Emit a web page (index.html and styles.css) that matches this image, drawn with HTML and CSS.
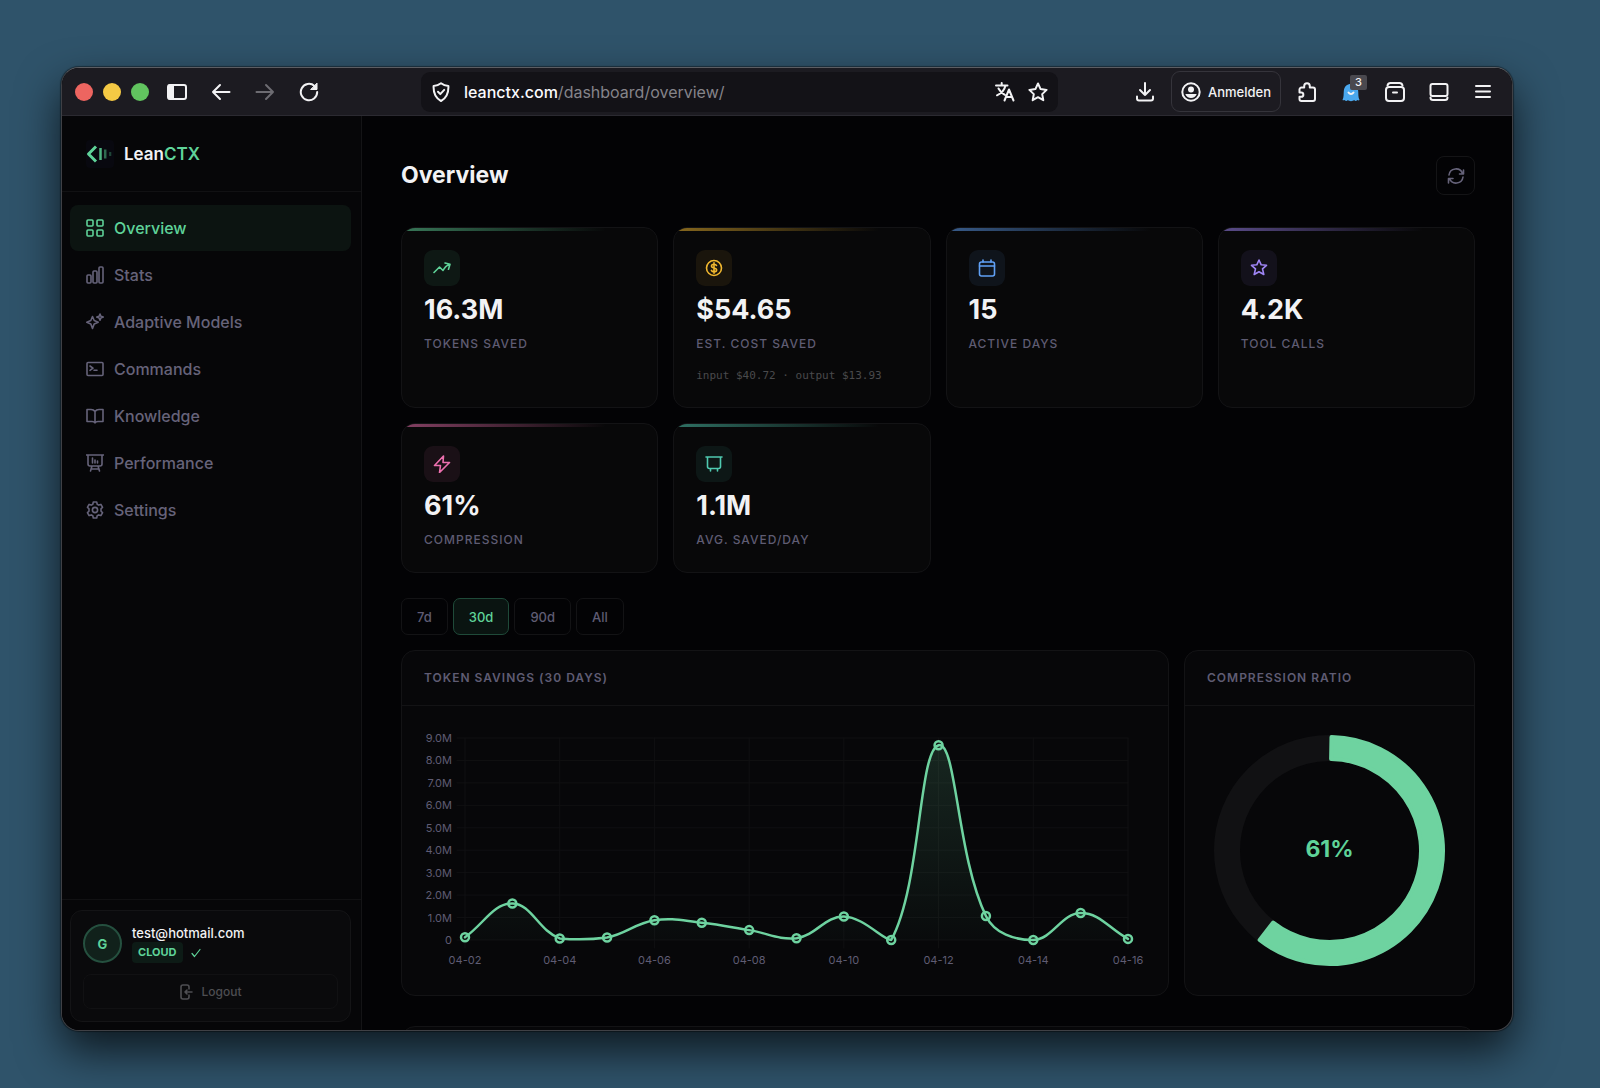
FILE: index.html
```html
<!DOCTYPE html>
<html lang="en">

<head>
    <meta charset="UTF-8" />
    <meta name="viewport" content="width=device-width, initial-scale=1.0" />
    <title>LeanCTX - Overview</title>
    <link rel="stylesheet" href="styles.css">
</head>

<body>
    <div class="window">
        <header class="toolbar">
            <div class="lights">
                <span class="light red"></span>
                <span class="light yellow"></span>
                <span class="light green"></span>
            </div>
            <div class="tools">
                <button class="tool" aria-label="Sidebar">
                    <svg width="20" height="20" viewBox="0 0 20 20"><rect x="1" y="3" width="18" height="14" rx="2" /><path d="M2 3.500h4v13H2z" fill="currentColor" /></svg>
                </button>
                <button class="tool" aria-label="Back">
                    <svg width="20" height="20" viewBox="0 0 20 20"><path d="M18.500 10H2M9 3l-7 7 7 7" /></svg>
                </button>
                <button class="tool dim" aria-label="Forward">
                    <svg width="20" height="20" viewBox="0 0 20 20"><path d="M1.500 10H18M11 3l7 7-7 7" /></svg>
                </button>
                <button class="tool" aria-label="Reload">
                    <svg width="20" height="20" viewBox="0 0 20 20"><path d="M18.200 10A8.200 8.200 0 1 1 15.500 4" /><path d="M18 1.500v6h-6z" fill="currentColor" stroke-width="1" /></svg>
                </button>
            </div>
            <div class="address">
                <svg width="20" height="20" viewBox="0 0 20 20"><path d="M10 1.200c2.200 1.700 4.800 2.600 7.400 2.800.3 6.500-1.800 12-7.400 15C4.400 16 2.300 10.500 2.600 4 5.200 3.800 7.800 2.900 10 1.200z" /><path d="M7 9.800l2.300 2.300 3.900-4.200" /></svg>
                <span class="url"><b>leanctx.com</b>/dashboard/overview/</span>
                <svg width="20" height="20" viewBox="0 0 20 20"><path d="M1 3.500h11.500M6.700 1v2.500M10.500 3.500C9.500 8 6 11.500 2 13.300M3.500 6.500c1.500 3 3.800 5 6.300 6.300M9.500 18.500l4.500-11 4.500 11M11 15h6" /></svg>
                <svg width="20" height="20" viewBox="0 0 20 20"><path d="M10 1.500l2.600 5.600 6 .8-4.400 4.200 1.100 6.100L10 15.200l-5.300 3 1.100-6.100L1.400 7.900l6-.8z" /></svg>
            </div>
            <div class="tools">
                <button class="tool" aria-label="Downloads">
                    <svg width="20" height="20" viewBox="0 0 20 20"><path d="M10 1v12M5 8l5 5 5-5M2 14.500v2a2 2 0 0 0 2 2h12a2 2 0 0 0 2-2v-2" /></svg>
                </button>
                <button class="signin">
                    <svg width="20" height="20" viewBox="0 0 20 20"><circle cx="10" cy="10" r="8.700" /><circle cx="10" cy="7.500" r="3" fill="currentColor" stroke="none" /><path d="M4.300 12h11.400c-1 2.600-3 4-5.700 4s-4.700-1.400-5.700-4z" fill="currentColor" stroke="none" /></svg>
                    Anmelden
                </button>
                <button class="tool" aria-label="Extensions">
                    <svg width="20" height="20" viewBox="0 0 20 20"><path d="M7.200 5.500V4a2.800 2.800 0 0 1 5.600 0v1.500H16a2 2 0 0 1 2 2V17a2 2 0 0 1-2 2H4.500a2 2 0 0 1-2-2v-2.200h1.700a2 2 0 0 0 0-4.300H2.500V7.500a2 2 0 0 1 2-2z" /></svg>
                </button>
                <button class="tool" aria-label="Blocker">
                    <svg width="20" height="20" viewBox="0 0 20 20"><path d="M3.500 18c-.7.500-1.700.3-2 0 1.500-3 1-6 1.300-9C3.200 4.500 6 2 10 2s6.800 2.500 7.200 7c.3 3-.2 6 1.300 9-.6.600-1.500.5-2.200 0-1 1.300-2.200 1.300-3.200 0-1 1.500-5.200 1.500-6.200 0-1 1.300-2.200 1.300-3.400 0z" fill="#4aa8ee" stroke="none" /><path d="M7.500 10.500c1.300 2 3.700 2 5 0" /></svg>
                    <span class="count">3</span>
                </button>
                <button class="tool" aria-label="Archive">
                    <svg width="22" height="22" viewBox="0 0 22 22"><rect x="2" y="6" width="18" height="14" rx="3" /><path d="M3.500 4.500C4 2.500 5 2 6.500 2h9c1.500 0 2.500.5 3 2.500M9 11.500h4" /></svg>
                </button>
                <button class="tool" aria-label="Panel">
                    <svg width="20" height="20" viewBox="0 0 20 20"><rect x="1.500" y="2" width="17" height="12" rx="2" /><path d="M1.500 15.500c0 1.800.8 2.500 2.500 2.500h12c1.700 0 2.500-.7 2.500-2.500" /></svg>
                </button>
                <button class="tool" aria-label="Menu">
                    <svg width="20" height="20" viewBox="0 0 20 20"><path d="M3 4h14M3 9.500h14M3 15h14" /></svg>
                </button>
            </div>
        </header>

        <div class="app">
            <aside class="sidebar">
                <div class="brand">
                    <svg width="28" height="28" viewBox="0 0 28 28"><rect width="28" height="28" rx="4" fill="#08080f" /><path d="M10 6.500L2.500 14l7.500 7.500" stroke="#5fd399" stroke-width="3" /><path d="M14.500 8v12" stroke="#4fb583" stroke-width="2.500" /><path d="M19.200 9.500v9" stroke="#2f6b50" stroke-width="2.500" /><path d="M24.200 12v4" stroke="#1f4537" stroke-width="2.200" /></svg>
                    <span>Lean<em>CTX</em></span>
                </div>
                <nav class="nav">
                    <a class="active" href="#overview">
                        <svg width="18" height="18" viewBox="0 0 18 18"><rect x="1" y="1" width="6" height="6" rx="1" /><rect x="11" y="1" width="6" height="6" rx="1" /><rect x="1" y="11" width="6" height="6" rx="1" /><rect x="11" y="11" width="6" height="6" rx="1" /></svg>
                        Overview
                    </a>
                    <a href="#stats">
                        <svg width="18" height="18" viewBox="0 0 18 18"><rect x="1" y="9" width="4" height="8" rx="1" /><rect x="7" y="5" width="4" height="12" rx="1" /><rect x="13" y="1" width="4" height="16" rx="1" /></svg>
                        Stats
                    </a>
                    <a href="#models">
                        <svg width="18" height="18" viewBox="0 0 18 18"><path d="M6.500 3.500l1.700 4 4 1.700-4 1.700-1.700 4.600-1.700-4.600-4-1.700 4-1.700z" /><path d="M14 1l.9 2.200 2.300.9-2.300.9L14 7.200 13.100 5l-2.300-.9 2.300-.9z" /></svg>
                        Adaptive Models
                    </a>
                    <a href="#commands">
                        <svg width="18" height="18" viewBox="0 0 18 18"><rect x="1" y="2.500" width="16" height="13" rx="1" /><path d="M4 6l3 2.200-3 2.200M8 10.200h3" /></svg>
                        Commands
                    </a>
                    <a href="#knowledge">
                        <svg width="18" height="18" viewBox="0 0 18 18"><path d="M9 4.500C8 3 6.500 2.500 5 2.500H1v12h5c1.500 0 2.500.5 3 1.500.5-1 1.500-1.500 3-1.500h5v-12h-4c-1.500 0-3 .5-4 2zM9 4.500V16" /></svg>
                        Knowledge
                    </a>
                    <a href="#performance">
                        <svg width="18" height="18" viewBox="0 0 18 18"><path d="M0 1h18M2 1v9a2 2 0 0 0 2 2h10a2 2 0 0 0 2-2V1M6 12l-1.500 5M12 12l1.500 5M5 15h8M6.500 4v5M9 6v3M11.500 7v2" /></svg>
                        Performance
                    </a>
                    <a href="#settings">
                        <svg width="18" height="18" viewBox="0 0 18 18"><path d="M7.300 1h3.400l.5 2.200 1.500.9 2.200-.7 1.700 2.900L15 7.900v2.200l1.600 1.600-1.700 2.900-2.200-.7-1.500.9-.5 2.200H7.300l-.5-2.200-1.500-.9-2.200.7-1.700-2.900L3 10.100V7.900L1.400 6.300l1.700-2.900 2.200.7 1.500-.9z" /><circle cx="9" cy="9" r="2.600" /></svg>
                        Settings
                    </a>
                </nav>
                <div class="account">
                    <div class="account-card">
                        <div class="user">
                            <span class="avatar">G</span>
                            <div>
                                <div class="email">test@hotmail.com</div>
                                <div class="plan">
                                    <span class="badge">CLOUD</span>
                                    <svg width="10" height="10" viewBox="0 0 10 10"><path d="M1 5.500L3.500 8.500 9 1.500" /></svg>
                                </div>
                            </div>
                        </div>
                        <button class="logout">
                            <svg width="14" height="16" viewBox="0 0 14 16"><path d="M10 5V3a2 2 0 0 0-2-2H4a2 2 0 0 0-2 2v10a2 2 0 0 0 2 2h4a2 2 0 0 0 2-2v-2M13 8H6M8 6L6 8l2 2" /></svg>
                            Logout
                        </button>
                    </div>
                </div>
            </aside>

            <main class="content">
                <div class="page-head">
                    <h1>Overview</h1>
                    <button class="refresh" aria-label="Refresh">
                        <svg width="18" height="18" viewBox="0 0 18 18"><path d="M2 8a7 7 0 0 1 13.500-1.500M16 10a7 7 0 0 1-13.500 1.500M16.500 3v4h-4M1.500 16v-4.500h4.500" /></svg>
                    </button>
                </div>

                <section class="cards">
                    <article class="card c-green">
                        <div class="icon"><svg width="18" height="18" viewBox="0 0 18 18"><path d="M1 13.500L6.500 8l3.500 3.500c1.500-3 3.500-5 6.500-6M12 4l5 1.300-1.500 5" /></svg></div>
                        <div class="value">16.3M</div>
                        <div class="label">Tokens saved</div>
                    </article>
                    <article class="card c-yellow">
                        <div class="icon"><svg width="18" height="18" viewBox="0 0 18 18"><circle cx="9" cy="9" r="7.500" /><path d="M11.500 6.500C11 5.600 10.200 5.200 9 5.200c-1.500 0-2.500.8-2.500 1.900S7.500 8.700 9 9s2.600.8 2.600 1.900-1 1.900-2.600 1.900c-1.300 0-2.200-.5-2.600-1.400M9 3.800v10.400" /></svg></div>
                        <div class="value">$54.65</div>
                        <div class="label">Est. cost saved</div>
                        <div class="detail">input $40.72 · output $13.93</div>
                    </article>
                    <article class="card c-blue">
                        <div class="icon"><svg width="18" height="18" viewBox="0 0 18 18"><rect x="1.500" y="3" width="15" height="14" rx="2" /><path d="M1.500 7h15M5 1v2M13 1v2" /></svg></div>
                        <div class="value">15</div>
                        <div class="label">Active days</div>
                    </article>
                    <article class="card c-purple">
                        <div class="icon"><svg width="18" height="18" viewBox="0 0 18 18"><path d="M9 1l2.200 4.800 5.300.5-4 3.600 1.300 5.600L9 12.700l-4.800 2.800 1.300-5.600-4-3.600 5.300-.5z" /></svg></div>
                        <div class="value">4.2K</div>
                        <div class="label">Tool calls</div>
                    </article>
                    <article class="card c-pink">
                        <div class="icon"><svg width="18" height="18" viewBox="0 0 18 18"><path d="M10.500 1L1.500 10.500h6L6.500 17.500l10-10h-6.500z" /></svg></div>
                        <div class="value">61%</div>
                        <div class="label">Compression</div>
                    </article>
                    <article class="card c-teal">
                        <div class="icon"><svg width="18" height="18" viewBox="0 0 18 18"><path d="M1 2h16M2.500 2v9.500a2 2 0 0 0 2 2h9a2 2 0 0 0 2-2V2M5.500 13.500V16M12.500 13.500V16" /></svg></div>
                        <div class="value">1.1M</div>
                        <div class="label">Avg. saved/day</div>
                    </article>
                </section>

                <div class="ranges">
                    <button>7d</button>
                    <button class="active">30d</button>
                    <button>90d</button>
                    <button>All</button>
                </div>

                <section class="panels">
                    <article class="panel">
                        <h2>Token savings (30 days)</h2>
                        <div class="panel-body">
                            <svg id="savings" viewBox="0 0 722 245">
                                <defs>
                                    <linearGradient id="fade" gradientUnits="userSpaceOnUse" x1="0" y1="10" x2="0" y2="212">
                                        <stop offset="0" stop-color="#6ed3a0" stop-opacity="0.16" />
                                        <stop offset="1" stop-color="#6ed3a0" stop-opacity="0.02" />
                                    </linearGradient>
                                </defs>
                            </svg>
                        </div>
                    </article>
                    <article class="panel">
                        <h2>Compression ratio</h2>
                        <div class="panel-body">
                            <svg id="ratio" viewBox="0 0 245 245">
                                <circle class="track" cx="122.500" cy="122.500" r="102.500" />
                                <text x="122.500" y="129">61%</text>
                            </svg>
                        </div>
                    </article>
                </section>

                <section class="panel next"></section>
            </main>
        </div>
    </div>

    <script>
        // daily tokens saved, in millions, 04-02 to 04-16
        const savings = [0.12, 1.63, 0.07, 0.11, 0.88, 0.77, 0.44, 0.08, 1.05, 0, 8.68, 1.07, 0, 1.2, 0.05];
        const area = { left: 41, right: 704, top: 10, bottom: 212 };
        const chart = document.getElementById("savings");

        function add(parent, tag, attrs, text) {
            const el = document.createElementNS("http://www.w3.org/2000/svg", tag);
            for (const key in attrs) {
                el.setAttribute(key, attrs[key]);
            }
            if (text !== undefined) {
                el.textContent = text;
            }
            parent.appendChild(el);
        }

        const getX = (i) => area.left + (area.right - area.left) * i / (savings.length - 1);
        const getY = (v) => area.bottom - (area.bottom - area.top) * v / 9;
        const clamp = (y) => Math.max(area.top, Math.min(area.bottom, y));

        function drawAxes() {
            for (let v = 0; v <= 9; v++) {
                add(chart, "line", { class: "grid", x1: area.left - 8, x2: area.right, y1: getY(v), y2: getY(v) });
                add(chart, "text", { class: "tick end", x: 28, y: getY(v) + 4 }, v === 0 ? "0" : v + ".0M");
            }
            for (let i = 0; i < savings.length; i += 2) {
                add(chart, "line", { class: "grid", x1: getX(i), x2: getX(i), y1: area.top, y2: area.bottom + 8 });
                add(chart, "text", { class: "tick", x: getX(i), y: 236 }, "04-" + String(i + 2).padStart(2, "0"));
            }
        }

        function drawLine() {
            const tension = 0.4;
            const pts = savings.map((v, i) => ({ x: getX(i), y: getY(v) }));
            const ctrl = pts.map((p, i) => {
                const prev = pts[i - 1] ?? p;
                const next = pts[i + 1] ?? p;
                const d1 = Math.hypot(p.x - prev.x, p.y - prev.y);
                const d2 = Math.hypot(next.x - p.x, next.y - p.y);
                const a = tension * d1 / (d1 + d2);
                const b = tension * d2 / (d1 + d2);
                return {
                    inX: p.x - a * (next.x - prev.x), inY: clamp(p.y - a * (next.y - prev.y)),
                    outX: p.x + b * (next.x - prev.x), outY: clamp(p.y + b * (next.y - prev.y))
                };
            });

            let d = `M${pts[0].x} ${pts[0].y}`;
            for (let i = 1; i < pts.length; i++) {
                d += `C${ctrl[i - 1].outX} ${ctrl[i - 1].outY} ${ctrl[i].inX} ${ctrl[i].inY} ${pts[i].x} ${pts[i].y}`;
            }
            add(chart, "path", { class: "area", d: d + `V${area.bottom}H${area.left}Z` });
            add(chart, "path", { class: "line", d });
            for (const p of pts) {
                add(chart, "circle", { class: "dot", cx: p.x, cy: p.y, r: 4 });
            }
        }

        function drawRatio(degrees) {
            const point = (r, deg) => {
                const t = deg * Math.PI / 180;
                return `${122.5 + r * Math.sin(t)} ${122.5 - r * Math.cos(t)}`;
            };
            // inset by 2 on all sides, the round stroke fills it up again
            const d = `M${point(113.5, 1)}A113.5 113.5 0 1 1 ${point(113.5, degrees - 1)}` +
                `L${point(91.5, degrees - 1)}A91.5 91.5 0 1 0 ${point(91.5, 1)}Z`;
            add(document.getElementById("ratio"), "path", { class: "arc", d });
        }

        drawAxes();
        drawLine();
        drawRatio(219);
    </script>
</body>

</html>
```
FILE: styles.css
```css
* {
    box-sizing: border-box;
}

body {
    margin: 0;
    height: 100vh;
    padding: 67px 87px 57px 61px;
    display: flex;
    background-color: #2f536a;
    font-family: Inter, "Liberation Sans", sans-serif;
    color: #f2f2f4;
    overflow: hidden;
}

button {
    margin: 0;
    padding: 0;
    border: none;
    background: none;
    color: inherit;
    font-family: inherit;
}

svg {
    display: block;
    flex-shrink: 0;
    fill: none;
    stroke: currentColor;
    stroke-width: 2;
    stroke-linecap: round;
    stroke-linejoin: round;
}

h1,
h2 {
    margin: 0;
}

.window {
    flex: 1;
    min-width: 0;
    display: flex;
    flex-direction: column;
    border: 1px solid #3f4045;
    border-top-color: #5c5d62;
    border-radius: 18px;
    background-color: #030305;
    box-shadow: 0 0 1px 1px rgba(0, 0, 0, 0.4), 0 20px 44px rgba(0, 0, 0, 0.7);
    overflow: hidden;
}

/* browser toolbar */
.toolbar {
    height: 48px;
    flex-shrink: 0;
    display: flex;
    align-items: center;
    gap: 10px;
    padding: 0 11px 0 13px;
    background-color: #1c1b21;
    border-bottom: 1px solid #2b2a31;
}

.lights {
    display: flex;
    gap: 10px;
}

.light {
    width: 18px;
    height: 18px;
    border-radius: 50%;
}

.red {
    background-color: #ed6560;
}

.yellow {
    background-color: #f4c944;
}

.green {
    background-color: #61c45f;
}

.tools {
    display: flex;
    align-items: center;
    gap: 8px;
}

.tool {
    position: relative;
    width: 36px;
    height: 36px;
    display: flex;
    align-items: center;
    justify-content: center;
}

.dim {
    color: #6d6c72;
}

.address {
    flex: 1;
    height: 40px;
    margin: 0 59px 0 84px;
    padding: 0 10px;
    display: flex;
    align-items: center;
    gap: 13px;
    background-color: #131217;
    border-radius: 9px;
}

.url {
    flex: 1;
    font-size: 16px;
    color: #85848a;
}

.url b {
    font-weight: 500;
    color: #fbfbfe;
}

.signin {
    height: 41px;
    padding: 0 9px;
    display: flex;
    align-items: center;
    gap: 7px;
    border: 1px solid #35343b;
    border-radius: 9px;
    font-size: 13px;
    font-weight: 500;
}

.count {
    position: absolute;
    top: 1px;
    right: 2px;
    width: 17px;
    line-height: 15px;
    border-radius: 2px;
    background-color: #4a494f;
    font-size: 11px;
    font-weight: 500;
}

.app {
    flex: 1;
    min-height: 0;
    display: flex;
}

/* sidebar */
.sidebar {
    width: 300px;
    flex-shrink: 0;
    display: flex;
    flex-direction: column;
    background-color: #060608;
    border-right: 1px solid #141416;
}

.brand {
    height: 76px;
    padding: 0 24px;
    display: flex;
    align-items: center;
    gap: 10px;
    border-bottom: 1px solid #111113;
    font-size: 17px;
    font-weight: 600;
}

.brand svg {
    stroke: none;
    stroke-linecap: butt;
}

.brand em {
    font-style: normal;
    color: #5fd399;
}

.nav {
    flex: 1;
    padding: 13px 10px 0 8px;
    display: flex;
    flex-direction: column;
    gap: 1px;
}

.nav a {
    height: 46px;
    padding: 0 16px;
    display: flex;
    align-items: center;
    gap: 10px;
    border-radius: 8px;
    font-size: 16px;
    font-weight: 500;
    color: #66637a;
    text-decoration: none;
}

.nav svg,
.icon svg,
.refresh svg,
.logout svg {
    stroke-width: 1.6;
}

.nav .active {
    background-color: #0c1411;
    color: #5fd399;
}

.account {
    padding: 10px 10px 8px 8px;
    border-top: 1px solid #111113;
}

.account-card {
    padding: 13px 12px 12px;
    border: 1px solid #141416;
    border-radius: 12px;
    background-color: #0a0a0c;
}

.user {
    display: flex;
    align-items: center;
    gap: 10px;
    margin-bottom: 11px;
}

.avatar {
    width: 39px;
    height: 39px;
    display: flex;
    align-items: center;
    justify-content: center;
    border: 2px solid #25503f;
    border-radius: 50%;
    background-color: #11211b;
    color: #5fd399;
    font-size: 13px;
    font-weight: 700;
}

.email {
    line-height: 18px;
    font-size: 13px;
    font-weight: 500;
}

.plan {
    display: flex;
    align-items: center;
    gap: 8px;
    color: #5fd399;
}

.plan svg {
    stroke-width: 1.2;
}

.badge {
    padding: 0 6px;
    line-height: 21px;
    border-radius: 4px;
    background-color: #0d1b16;
    font-size: 11px;
    font-weight: 700;
}

.logout {
    width: 100%;
    height: 35px;
    display: flex;
    align-items: center;
    justify-content: center;
    gap: 8px;
    border: 1px solid #111113;
    border-radius: 8px;
    color: #4e4e52;
    font-size: 12px;
    font-weight: 500;
}

/* page */
.content {
    flex: 1;
    min-width: 0;
    padding: 40px 37px 0 39px;
    overflow: hidden;
}

.page-head {
    display: flex;
    align-items: center;
    justify-content: space-between;
    margin-bottom: 32px;
}

h1 {
    font-size: 23px;
    line-height: 39px;
    font-weight: 700;
}

.refresh {
    width: 39px;
    height: 39px;
    display: flex;
    align-items: center;
    justify-content: center;
    border: 1px solid #141416;
    border-radius: 8px;
    color: #66637a;
}

.cards {
    display: grid;
    grid-template-columns: repeat(4, 1fr);
    gap: 15px;
    margin-bottom: 25px;
}

.card {
    --tint: #5fd399;
    position: relative;
    padding: 22px;
    border: 1px solid #131315;
    border-radius: 14px;
    background-color: #080809;
    overflow: hidden;
}

.card::before {
    content: "";
    position: absolute;
    top: 0;
    left: 0;
    right: 0;
    height: 3px;
    background: linear-gradient(90deg, var(--tint), transparent 80%);
    opacity: 0.55;
}

.c-yellow {
    --tint: #f0b72f;
}

.c-blue {
    --tint: #60a0f5;
}

.c-purple {
    --tint: #9f85f5;
}

.c-pink {
    --tint: #ec6fae;
}

.c-teal {
    --tint: #4fc9b0;
}

.icon {
    width: 36px;
    height: 36px;
    display: flex;
    align-items: center;
    justify-content: center;
    border-radius: 9px;
    background-color: color-mix(in srgb, var(--tint) 8%, transparent);
    color: var(--tint);
}

.value {
    margin: 6px 0;
    font-size: 27px;
    line-height: 36px;
    font-weight: 700;
}

.label {
    font-size: 12px;
    line-height: 20px;
    font-weight: 500;
    letter-spacing: 1px;
    text-transform: uppercase;
    color: #5f5c73;
}

.detail {
    margin-top: 13px;
    font-family: "DejaVu Sans Mono", monospace;
    font-size: 11px;
    line-height: 18px;
    color: #4a4a4c;
}

.ranges {
    display: flex;
    gap: 5px;
    margin-bottom: 15px;
}

.ranges button {
    height: 37px;
    padding: 0 15px;
    border: 1px solid #131315;
    border-radius: 7px;
    color: #5f5c73;
    font-size: 13px;
    font-weight: 500;
}

.ranges .active {
    border-color: #1f4a39;
    background-color: #0a1411;
    color: #5fd399;
}

.panels {
    display: grid;
    grid-template-columns: minmax(0, 1fr) 291px;
    gap: 15px;
    margin-bottom: 30px;
}

.panel {
    border: 1px solid #131315;
    border-radius: 14px;
    background-color: #070709;
}

.next {
    height: 300px;
}

.panel h2 {
    padding: 0 22px;
    border-bottom: 1px solid #131315;
    font-size: 12px;
    line-height: 54px;
    font-weight: 600;
    letter-spacing: 1px;
    text-transform: uppercase;
    color: #5f5c73;
}

.panel-body {
    padding: 22px;
}

.panel-body svg {
    width: 100%;
}

.grid {
    stroke: #101012;
    stroke-width: 1;
}

.tick {
    stroke: none;
    fill: #5f5c73;
    font-size: 11px;
    text-anchor: middle;
}

.end {
    text-anchor: end;
}

.area {
    stroke: none;
    fill: url(#fade);
}

.line {
    stroke: #6ed3a0;
    stroke-width: 2.5;
}

.dot {
    stroke: #6ed3a0;
    stroke-width: 2.5;
}

.track {
    stroke: #111113;
    stroke-width: 26;
}

.arc {
    fill: #6ed3a0;
    stroke: #6ed3a0;
    stroke-width: 4;
}

#ratio text {
    stroke: none;
    fill: #5fd399;
    font-size: 23px;
    font-weight: 700;
    text-anchor: middle;
}
```
